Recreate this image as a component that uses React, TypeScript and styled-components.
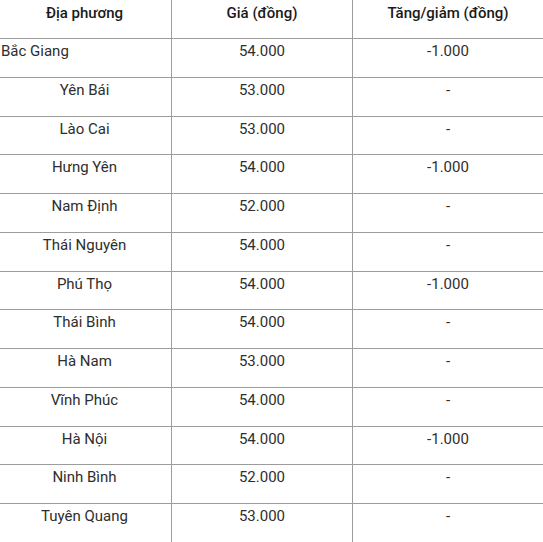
import React from "react";
import styled, { createGlobalStyle } from "styled-components";

const Global = createGlobalStyle`
  html, body { margin: 0; padding: 0; background: #fff; }
  body { font-family: Roboto, "Noto Sans", sans-serif; }
`;

const Table = styled.div`
  width: 543px;
  height: 542px;
  overflow: hidden;
  display: flex;
  flex-direction: column;
  color: #333;
  font-size: 15px;
`;

const Row = styled.div<{ $head?: boolean }>`
  display: grid;
  grid-template-columns: 172px 181px 1fr;
  box-sizing: border-box;
  height: ${(p) => (p.$head ? "39px" : "38.75px")};
  flex: none;
  border-bottom: 1px solid #9c9c9c;
  font-weight: ${(p) => (p.$head ? 500 : 400)};
  color: ${(p) => (p.$head ? "#1a1a1a" : "#2e2e2e")};
`;

const Cell = styled.div<{ $align?: "left" | "center"; $pr?: number; $pt?: number; $last?: boolean }>`
  box-sizing: border-box;
  border-right: ${(p) => (p.$last ? "none" : "1px solid #9c9c9c")};
  text-align: ${(p) => p.$align ?? "center"};
  padding-top: ${(p) => p.$pt ?? 3}px;
  padding-right: ${(p) => p.$pr ?? 0}px;
  padding-left: ${(p) => (p.$align === "left" ? 1 : 0)}px;
  white-space: nowrap;
  line-height: 18px;
`;

type R = { name: string; price: string; change: string };

const rows: R[] = [
  { name: "Bắc Giang", price: "54.000", change: "-1.000" },
  { name: "Yên Bái", price: "53.000", change: "-" },
  { name: "Lào Cai", price: "53.000", change: "-" },
  { name: "Hưng Yên", price: "54.000", change: "-1.000" },
  { name: "Nam Định", price: "52.000", change: "-" },
  { name: "Thái Nguyên", price: "54.000", change: "-" },
  { name: "Phú Thọ", price: "54.000", change: "-1.000" },
  { name: "Thái Bình", price: "54.000", change: "-" },
  { name: "Hà Nam", price: "53.000", change: "-" },
  { name: "Vĩnh Phúc", price: "54.000", change: "-" },
  { name: "Hà Nội", price: "54.000", change: "-1.000" },
  { name: "Ninh Bình", price: "52.000", change: "-" },
  { name: "Tuyên Quang", price: "53.000", change: "-" },
];

export default function App() {
  return (
    <>
      <Global />
      <Table>
        <Row $head>
          <Cell $pt={4} $pr={2}>Địa phương</Cell>
          <Cell $pt={4}>Giá (đồng)</Cell>
          <Cell $pt={4} $last>Tăng/giảm (đồng)</Cell>
        </Row>
        {rows.map((r, i) => (
          <Row key={r.name}>
            <Cell $align={i === 0 ? "left" : "center"} $pr={2}>{r.name}</Cell>
            <Cell>{r.price}</Cell>
            <Cell $last>{r.change}</Cell>
          </Row>
        ))}
      </Table>
    </>
  );
}
